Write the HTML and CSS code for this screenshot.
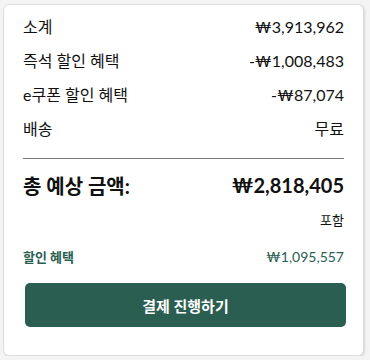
FILE: index.html
```html
<!DOCTYPE html>
<html lang="ko">
<head>
  <meta charset="UTF-8">
  <meta name="viewport" content="width=device-width, initial-scale=1.0">
  <title>주문 요약</title>
  <link rel="stylesheet" href="styles.css">
</head>
<body>
  <div class="summary">
    <div class="row">
      <span>소계</span>
      <span>₩3,913,962</span>
    </div>
    <div class="row">
      <span>즉석 할인 혜택</span>
      <span>-₩1,008,483</span>
    </div>
    <div class="row">
      <span>e쿠폰 할인 혜택</span>
      <span>-₩87,074</span>
    </div>
    <div class="row">
      <span>배송</span>
      <span>무료</span>
    </div>
    <hr class="divider">
    <div class="row total">
      <span>총 예상 금액:</span>
      <span>₩2,818,405</span>
    </div>
    <div class="tax">포함</div>
    <div class="row saving">
      <span class="saving-label">할인 혜택</span>
      <span>₩1,095,557</span>
    </div>
    <button class="checkout" type="button">결제 진행하기</button>
  </div>
</body>
</html>
```

FILE: styles.css
```css
body {
  margin: 0;
  font-family: Lato, "Noto Sans CJK KR", sans-serif;
  background: #f4f4f4;
  color: #111;
}
.summary {
  background: white;
  margin: 4px 0 0 3px;
  width: 361px;
  height: 352px;
  box-sizing: border-box;
  border: 1px solid #dcdcdc;
  border-radius: 6px;
  box-shadow: 1px 1px 2px rgba(0, 0, 0, 0.12);
  padding: 4px 19px 0;
}
.row {
  display: flex;
  justify-content: space-between;
  align-items: center;
  font-size: 16px;
  height: 34px;
}
.divider {
  border: none;
  border-top: 1px solid #777;
  margin: 13px 0 9px;
}
.total {
  font-size: 20px;
  font-weight: bold;
}
.tax {
  text-align: right;
  font-size: 13px;
  margin-top: 8px;
}
.saving {
  margin-top: 10px;
  font-size: 14px;
  color: #2a5e50;
}
.saving-label {
  font-size: 13px;
  font-weight: bold;
}
.checkout {
  display: block;
  width: 321px;
  height: 44px;
  margin: 10px 0 0 2px;
  border: none;
  border-radius: 5px;
  background: #2a5e50;
  color: white;
  font-family: inherit;
  font-size: 15px;
  font-weight: bold;
  cursor: pointer;
}
```
